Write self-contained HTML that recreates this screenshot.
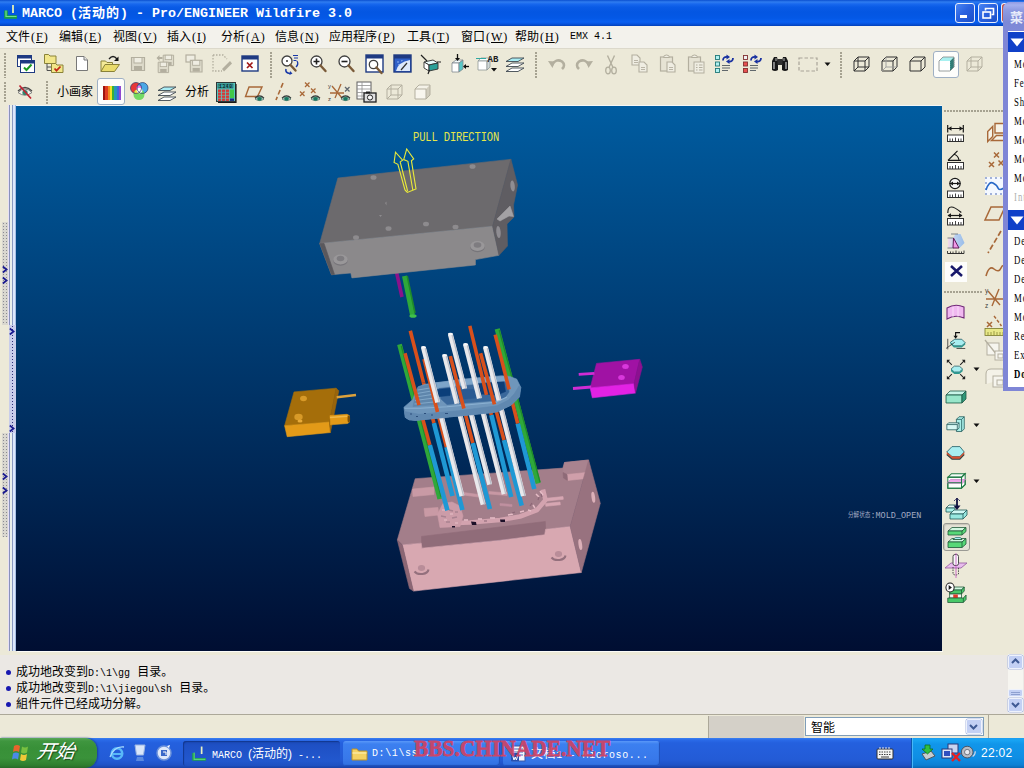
<!DOCTYPE html>
<html lang="zh-CN"><head><meta charset="utf-8"><title>MARCO - Pro/ENGINEER Wildfire 3.0</title>
<style>
*{margin:0;padding:0;box-sizing:border-box}
html,body{width:1024px;height:768px;overflow:hidden;background:#ece9d8}
body{position:relative;font-family:"Liberation Sans","Noto Sans CJK SC",sans-serif;font-size:12px;color:#000}
.a{position:absolute}
.t{position:absolute;white-space:nowrap;line-height:1}
#title{left:0;top:0;width:1024px;height:26px;background:linear-gradient(#0a4fd0 0,#2f7df0 2px,#1868ee 4px,#0a5be6 7px,#0456e2 12px,#0458e6 18px,#0a60f0 22px,#0653dd 24px,#0340b8 26px)}
#menubar{left:0;top:26px;width:1024px;height:23px;background:#f3f2ec;border-bottom:1px solid #dcd9cb}
#tb{left:0;top:49px;width:1024px;height:56px;background:#ece9d8}
.mi{position:absolute;top:30px;height:14px;white-space:nowrap;font-size:12px;line-height:14px;font-family:"Liberation Serif","Noto Sans CJK SC",serif}
.mi i{font-style:normal;letter-spacing:1px;font-size:12px;margin-left:1px}
.mi u{text-decoration:underline}
#view{left:16px;top:106px;width:926px;height:545px;background:linear-gradient(#005ca0,#000e32);box-shadow:1px 1px 0 #fbfbf8,0 -1px 0 #f4f6f6}
#msg{left:0;top:655px;width:1024px;height:59px;background:#ebe8e4}
#status{left:0;top:714px;width:1024px;height:24px;background:#ece9d8;border-top:1px solid #aca899}
#task{left:0;top:738px;width:1024px;height:30px;background:linear-gradient(#3a80f0 0,#2a6ae8 2px,#2460de 5px,#245edb 12px,#235bd6 22px,#1f52c6 27px,#1941a5 30px)}
.dotsv{position:absolute;width:2px;background:repeating-linear-gradient(#a6a291 0,#a6a291 2px,transparent 2px,transparent 3px)}
.dotsh{position:absolute;height:2px;background:repeating-linear-gradient(90deg,#a6a291 0,#a6a291 2px,transparent 2px,transparent 3px)}
.ic{position:absolute;overflow:visible}
.selbtn{position:absolute;background:#fdfdfb;border:1px solid #9fb0c4;border-radius:3px}
.msgl{position:absolute;left:16px;font-size:12px;line-height:16px;white-space:nowrap;font-family:"Liberation Mono","Noto Sans CJK SC",monospace}
.msgl b{font-weight:normal;font-size:10px;letter-spacing:0px}
.bul{position:absolute;left:6px;width:5px;height:5px;border-radius:50%;background:#1818b0}
</style></head>
<body>
<div id="title" class="a"></div>
<svg class="ic" style="left:4px;top:5px" width="14" height="14" viewBox="0 0 14 14"><path d="M2 5.500v6.500h11" fill="none" stroke="#18a048" stroke-width="3.600"/><path d="M9 0v8" stroke="#e4f0b8" stroke-width="1.800" fill="none"/><path d="M2 5.500v6h10.500" fill="none" stroke="#70e090" stroke-width="1.200"/></svg>
<div class="t" style="left:22px;top:6px;color:#fff;font-weight:bold;font-size:13.33px;font-family:'Liberation Mono','Noto Sans CJK SC',monospace;letter-spacing:0px">MARCO (<span style="font-size:13px;letter-spacing:1px;font-family:'Liberation Sans','Noto Sans CJK SC',sans-serif">活动的</span>) - Pro/ENGINEER Wildfire 3.0</div>
<div class="a" style="left:955px;top:3px;width:20px;height:20px;border:1px solid #e8eefc;border-radius:3px;background:linear-gradient(135deg,#4a86f4 0,#2a62e0 45%,#1c4fc8 100%)"></div>
<div class="a" style="left:978px;top:3px;width:20px;height:20px;border:1px solid #e8eefc;border-radius:3px;background:linear-gradient(135deg,#4a86f4 0,#2a62e0 45%,#1c4fc8 100%)"></div>
<div class="a" style="left:960px;top:15px;width:7px;height:3px;background:#fff"></div>
<svg class="ic" style="left:982px;top:7px" width="13" height="13" viewBox="0 0 13 13"><path d="M3.5 3.5v-2h8v6h-2" fill="none" stroke="#fff" stroke-width="1.6"/><rect x="1" y="5" width="7.5" height="6" fill="none" stroke="#fff" stroke-width="1.6"/></svg>
<div class="a" style="left:1001px;top:3px;width:6px;height:20px;border:1px solid #e8eefc;border-right:0;border-radius:3px 0 0 3px;background:#c8584a"></div>
<div id="menubar" class="a"></div>
<div class="mi" style="left:6px">文件<i>(<u>F</u>)</i></div>
<div class="mi" style="left:59px">编辑<i>(<u>E</u>)</i></div>
<div class="mi" style="left:113px">视图<i>(<u>V</u>)</i></div>
<div class="mi" style="left:167px">插入<i>(<u>I</u>)</i></div>
<div class="mi" style="left:221px">分析<i>(<u>A</u>)</i></div>
<div class="mi" style="left:275px">信息<i>(<u>N</u>)</i></div>
<div class="mi" style="left:329px">应用程序<i>(<u>P</u>)</i></div>
<div class="mi" style="left:407px">工具<i>(<u>T</u>)</i></div>
<div class="mi" style="left:461px">窗口<i>(<u>W</u>)</i></div>
<div class="mi" style="left:515px">帮助<i>(<u>H</u>)</i></div>
<div class="mi" style="left:570px;font-family:'Liberation Mono',monospace;font-size:10px;letter-spacing:0px">EMX 4.1</div>
<div id="tb" class="a"></div>
<div class="a" style="left:0;top:105px;width:16px;height:546px;background:#ece9d8"></div>
<div class="a" style="left:8px;top:105px;width:8px;height:220px;background:linear-gradient(90deg,#e6e0f6 0,#e6e0f6 1px,#8a92ba 1px,#8a92ba 2px,#eaf0ec 2px,#eaf0ec 4px,#8a9ac2 4px,#8a9ac2 5px,#dce8fc 5px,#dce8fc 7px,#a9c0e6 7px,#a9c0e6 8px)"></div>
<div class="a" style="left:8px;top:433px;width:8px;height:218px;background:linear-gradient(90deg,#e6e0f6 0,#e6e0f6 1px,#8a92ba 1px,#8a92ba 2px,#eaf0ec 2px,#eaf0ec 4px,#8a9ac2 4px,#8a9ac2 5px,#dce8fc 5px,#dce8fc 7px,#a9c0e6 7px,#a9c0e6 8px)"></div>
<div class="a" style="left:2px;top:222px;width:6px;height:103px;background:#d9d7cf;background-image:radial-gradient(circle,#8a8a92 0.7px,transparent 1px);background-size:3px 3px"></div>
<div class="a" style="left:2px;top:433px;width:6px;height:104px;background:#d9d7cf;background-image:radial-gradient(circle,#8a8a92 0.7px,transparent 1px);background-size:3px 3px"></div>
<div class="a" style="left:9px;top:325px;width:7px;height:108px;background:#c9cdea;background-image:radial-gradient(circle,#30307a 0.7px,transparent 1px);background-size:7px 3px"></div>
<svg class="ic" style="left:2px;top:266px" width="6" height="7" viewBox="0 0 6 7"><path d="M0.8 0.5L4.6 3.5L0.8 6.5" fill="none" stroke="#1a1a90" stroke-width="1.7"/></svg>
<svg class="ic" style="left:2px;top:277px" width="6" height="7" viewBox="0 0 6 7"><path d="M0.8 0.5L4.6 3.5L0.8 6.5" fill="none" stroke="#1a1a90" stroke-width="1.7"/></svg>
<svg class="ic" style="left:9px;top:328px" width="6" height="7" viewBox="0 0 6 7"><path d="M0.8 0.5L4.6 3.5L0.8 6.5" fill="none" stroke="#1a1a90" stroke-width="1.7"/></svg>
<svg class="ic" style="left:9px;top:425px" width="6" height="7" viewBox="0 0 6 7"><path d="M0.8 0.5L4.6 3.5L0.8 6.5" fill="none" stroke="#1a1a90" stroke-width="1.7"/></svg>
<svg class="ic" style="left:2px;top:473px" width="6" height="7" viewBox="0 0 6 7"><path d="M0.8 0.5L4.6 3.5L0.8 6.5" fill="none" stroke="#1a1a90" stroke-width="1.7"/></svg>
<svg class="ic" style="left:2px;top:487px" width="6" height="7" viewBox="0 0 6 7"><path d="M0.8 0.5L4.6 3.5L0.8 6.5" fill="none" stroke="#1a1a90" stroke-width="1.7"/></svg>
<div id="view" class="a"></div>
<div class="a" style="left:942px;top:105px;width:82px;height:546px;background:#ece9d8"></div>
<div class="dotsh" style="left:944px;top:110px;width:60px"></div>
<div class="dotsh" style="left:944px;top:291px;width:39px"></div>
<div id="msg" class="a"></div>
<div class="bul" style="top:670px"></div>
<div class="msgl" style="top:665px">成功地改变到<b>D:\1\gg</b> 目录。</div>
<div class="bul" style="top:686px"></div>
<div class="msgl" style="top:681px">成功地改变到<b>D:\1\jiegou\sh</b> 目录。</div>
<div class="bul" style="top:702px"></div>
<div class="msgl" style="top:697px">組件元件已经成功分解。</div>
<div class="a" style="left:1008px;top:654px;width:15px;height:59px;background:#f6f5f0"></div>
<div class="a" style="left:1008px;top:655px;width:15px;height:14px;border:1px solid #eef2fc;border-radius:2px;background:#c3d0f4;box-shadow:0 0 0 0.5px #a9b8e0"></div><svg class="ic" style="left:1009px;top:655px" width="13" height="13" viewBox="0 0 13 13"><path d="M3 8L6.5 4.5L10 8" fill="none" stroke="#3f5a94" stroke-width="2"/></svg>
<div class="a" style="left:1008px;top:698px;width:15px;height:14px;border:1px solid #eef2fc;border-radius:2px;background:#c3d0f4;box-shadow:0 0 0 0.5px #a9b8e0"></div><svg class="ic" style="left:1009px;top:698px" width="13" height="13" viewBox="0 0 13 13"><path d="M3 5L6.5 8.5L10 5" fill="none" stroke="#3f5a94" stroke-width="2"/></svg>
<div class="a" style="left:1008px;top:689px;width:15px;height:8px;border:1px solid #eef2fc;border-radius:2px;background:#c3d0f4"></div>
<div class="a" style="left:1011px;top:692px;width:9px;height:1px;background:#8ea0d0"></div><div class="a" style="left:1011px;top:694px;width:9px;height:1px;background:#8ea0d0"></div>
<div id="status" class="a"></div>
<div class="a" style="left:708px;top:716px;width:96px;height:22px;background:#d4d0c8;border-left:1px solid #aca899"></div>
<div class="a" style="left:805px;top:717px;width:179px;height:19px;background:#fff;border:1px solid #7f9db9"></div>
<div class="t" style="left:811px;top:722px;font-size:12px;font-family:'Liberation Sans','Noto Sans CJK SC',sans-serif">智能</div>
<div class="a" style="left:966px;top:719px;width:16px;height:15px;border:1px solid #eef2fc;border-radius:2px;background:#c3d0f4;box-shadow:0 0 0 0.5px #a9b8e0"></div><svg class="ic" style="left:967px;top:720px" width="13" height="13" viewBox="0 0 13 13"><path d="M3 5L6.5 8.5L10 5" fill="none" stroke="#3f5a94" stroke-width="2"/></svg>
<div class="a" style="left:988px;top:715px;width:1px;height:23px;background:#aca899"></div>
<svg class="ic" style="left:16px;top:106px" width="926" height="545" viewBox="16 106 926 545">
<line x1="396.5" y1="272.0" x2="402.0" y2="297.0" stroke="#8a128a" stroke-width="3.6" stroke-linecap="butt"/>
<line x1="404.5" y1="276.0" x2="412.5" y2="315.0" stroke="#2fa83a" stroke-width="5.0" stroke-linecap="butt"/>
<line x1="407.2" y1="276.0" x2="415.0" y2="313.0" stroke="#1f8a2a" stroke-width="1.6" stroke-linecap="butt"/>
<ellipse cx="413" cy="316" rx="3.6" ry="1.8" fill="#3fbf4a"/>
<polygon points="337.9,178.0 510.9,159.3 492.6,226.3 319.7,243.5" fill="#6c6a6d" stroke="#6c6a6d" stroke-width="0.6" stroke-linejoin="round" />
<polygon points="319.7,243.5 492.6,226.3 499.0,255.3 475.4,259.6 475.4,265.0 351.9,277.9 350.8,273.0 331.5,274.7" fill="#8b898b" stroke="#8b898b" stroke-width="0.6" stroke-linejoin="round" />
<polygon points="319.7,243.5 324.0,243.3 334.5,274.4 331.5,274.7" fill="#5a585c" stroke="#5a585c" stroke-width="0.6" stroke-linejoin="round" />
<polygon points="510.9,159.3 517.6,185.0 513.5,205.0 514.0,217.0 507.0,224.0 507.5,246.0 499.0,255.3 492.6,226.3" fill="#5f5d62" stroke="#5f5d62" stroke-width="0.6" stroke-linejoin="round" />
<polygon points="497.0,219.0 510.0,206.0 513.5,216.5 509.0,216.0 500.0,221.0" fill="#a3a1a4" stroke="#a3a1a4" stroke-width="0.6" stroke-linejoin="round" />
<ellipse cx="512.6" cy="186" rx="2.2" ry="5.5" fill="#8f8d92" transform="rotate(-6 512.6 186)"/>
<ellipse cx="498.500" cy="232" rx="2.2" ry="6" fill="#8f8d92" transform="rotate(-6 498.5 232)"/>
<ellipse cx="373.5" cy="177.5" rx="3" ry="2.3" fill="#8d8b8e"/>
<ellipse cx="472.5" cy="166.5" rx="3" ry="2.3" fill="#8d8b8e"/>
<ellipse cx="388.5" cy="228.5" rx="3" ry="2.3" fill="#8d8b8e"/>
<ellipse cx="426.0" cy="224.0" rx="3" ry="2.3" fill="#8d8b8e"/>
<ellipse cx="455.5" cy="227.0" rx="3" ry="2.3" fill="#8d8b8e"/>
<ellipse cx="356.0" cy="237.5" rx="3" ry="2.3" fill="#8d8b8e"/>
<path d="M385 203l1.500-1.500v4zM379 215l3 0-1.500 2z" fill="#8d8b8e"/>
<ellipse cx="340.5" cy="260.7" rx="7.2" ry="5" fill="#77757a"/>
<ellipse cx="340.5" cy="259.5" rx="7.2" ry="5" fill="#999799"/>
<ellipse cx="340.5" cy="258.5" rx="3.800" ry="2.800" fill="#7e7c80"/>
<ellipse cx="477.5" cy="247.2" rx="7.2" ry="5" fill="#77757a"/>
<ellipse cx="477.5" cy="246.0" rx="7.2" ry="5" fill="#999799"/>
<ellipse cx="477.5" cy="245.0" rx="3.800" ry="2.800" fill="#7e7c80"/>
<path d="M405 190L397.9 164.3L394.1 162.5L395.5 152.2L402.6 160.2L400.2 161.9L407.6 191M405 190L407.3 192.4L416 188.9L411.4 160.7L413.7 159L406.7 149L403.7 159.6L407.9 161.3L412.8 190" fill="none" stroke="#eaea3a" stroke-width="1.1" stroke-linejoin="miter"/>
<polygon points="415.2,478.7 562.8,468.1 564.5,462.5 588.6,460.0 570.2,526.6 545.6,529.3 544.7,534.8 421.9,548.2 421.2,543.2 402.4,544.9 397.3,540.0" fill="#a37e8a" stroke="#a37e8a" stroke-width="0.6" stroke-linejoin="round" />
<polygon points="564.5,462.5 588.6,460.0 586.0,472.5 567.0,474.5 563.0,472.5" fill="#a9838f" stroke="#a9838f" stroke-width="0.6" stroke-linejoin="round" />
<polygon points="567.0,474.5 586.0,472.5 586.0,478.5 567.5,480.5" fill="#cf9faa" stroke="#cf9faa" stroke-width="0.6" stroke-linejoin="round" />
<polygon points="563.0,472.5 567.0,474.5 567.5,480.5 563.5,478.0" fill="#8e6a77" stroke="#8e6a77" stroke-width="0.6" stroke-linejoin="round" />
<polygon points="412.5,489.0 434.0,487.0 434.0,494.5 413.0,496.5" fill="#c99aa5" stroke="#c99aa5" stroke-width="0.6" stroke-linejoin="round" />
<polygon points="424.0,508.5 438.0,507.5 438.5,515.0 425.0,516.5" fill="#c99aa5" stroke="#c99aa5" stroke-width="0.6" stroke-linejoin="round" />
<polygon points="421.5,536.4 545.3,521.5 545.6,529.3 544.7,534.8 421.9,548.2" fill="#906c79" stroke="#906c79" stroke-width="0.6" stroke-linejoin="round" />
<polygon points="402.4,544.9 421.2,543.2 421.9,548.2 500.0,540.3 544.7,534.8 545.6,529.3 570.2,526.6 581.3,572.5 413.4,591.1" fill="#d8a8b1" stroke="#d8a8b1" stroke-width="0.6" stroke-linejoin="round" />
<polygon points="397.3,540.0 402.4,544.9 413.4,591.1 409.5,588.5" fill="#8c6674" stroke="#8c6674" stroke-width="0.6" stroke-linejoin="round" />
<polygon points="588.6,460.0 600.3,503.3 581.3,572.5 570.2,526.6" fill="#98727f" stroke="#98727f" stroke-width="0.6" stroke-linejoin="round" />
<ellipse cx="593.3" cy="497.3" rx="1.8" ry="5.5" fill="#dcb0b8" transform="rotate(-8 593.3 497.3)"/>
<ellipse cx="580.3" cy="544.5" rx="1.8" ry="5.5" fill="#dcb0b8" transform="rotate(-8 580.3 544.5)"/>
<path d="M414.5 571.5a7.500 5 0 0 0 14 -2" fill="none" stroke="#94707d" stroke-width="2"/>
<ellipse cx="421.5" cy="568.0" rx="3.600" ry="3" fill="#b98d99"/>
<path d="M551.5 557.5a7.500 5 0 0 0 14 -2" fill="none" stroke="#94707d" stroke-width="2"/>
<ellipse cx="558.5" cy="554.0" rx="3.600" ry="3" fill="#b98d99"/>
<path d="M441 523.500L470 522.500L500 520L520 516.500L537 510L545.500 500L543 489.500" fill="none" stroke="#d3a3af" stroke-width="4.600" stroke-linejoin="round"/>
<polygon points="437.5,514.0 443.0,503.5 452.0,502.0 460.0,506.0 463.0,516.0 460.0,526.5 440.0,527.5" fill="#cc9ca8" stroke="#cc9ca8" stroke-width="0.6" stroke-linejoin="round" />
<path d="M444 506l3 0M449 510l4 1M441 516l5 1M452 518l5-1M446 522l4 0M455 512l3 0" stroke="#a98290" stroke-width="1.400"/>
<path d="M442 510l3 0M450 514l3 0M444 520l3 0M455 523l3 0" stroke="#e8c0c8" stroke-width="1.200"/>
<polygon points="547.0,498.2 563.0,496.6 563.3,499.3 547.3,501.0" fill="#d6a6b2" stroke="#d6a6b2" stroke-width="0.6" stroke-linejoin="round" />
<polygon points="545.5,503.5 560.0,502.0 560.3,504.8 545.8,506.3" fill="#d6a6b2" stroke="#d6a6b2" stroke-width="0.6" stroke-linejoin="round" />
<polygon points="463.5,492.5 478.5,494.5 478.5,497.0 463.5,495.0" fill="#c898a4" stroke="#c898a4" stroke-width="0.6" stroke-linejoin="round" />
<polygon points="489.0,491.5 507.0,493.0 507.0,495.5 489.0,494.0" fill="#c898a4" stroke="#c898a4" stroke-width="0.6" stroke-linejoin="round" />
<polygon points="500.0,503.5 512.0,504.5 512.0,506.5 500.0,505.5" fill="#c090a0" stroke="#c090a0" stroke-width="0.6" stroke-linejoin="round" />
<path d="M536 494l3 3M540 491l3 4M533 505l2 3M528 510l3 1M520 512l4-1M508 515l5-1M490 518l5 0M478 519l4 0M464 520l4 0" stroke="#e6bcc6" stroke-width="1.500"/>
<path d="M530 506l2-3M538 500l1-3M512 513l3-1M484 521l3 0M541 494l1 3" stroke="#8c6676" stroke-width="1.200"/>
<path d="M471 521.500l5 0.500l0.500 3l-4.500 0zM500 519.500l5 0l0 2.500l-4.500 0zM452 526h3v1.500h-3z" fill="#1c1028"/>
<line x1="399.5" y1="344.4" x2="439.8" y2="499.0" stroke="#2fa83a" stroke-width="4.8" stroke-linecap="butt"/>
<line x1="401.3" y1="346.0" x2="441.2" y2="497.0" stroke="#1f8a2a" stroke-width="1.3" stroke-linecap="butt"/>
<line x1="497.2" y1="328.8" x2="538.2" y2="483.4" stroke="#2fa83a" stroke-width="5.2" stroke-linecap="butt"/>
<line x1="499.2" y1="330.0" x2="540.0" y2="482.0" stroke="#1f8a2a" stroke-width="1.3" stroke-linecap="butt"/>
<line x1="429.8" y1="445.0" x2="447.4" y2="510.3" stroke="#1f98d4" stroke-width="4.6" stroke-linecap="butt"/>
<line x1="419.0" y1="405.1" x2="429.8" y2="445.0" stroke="#d8501c" stroke-width="3.6" stroke-linecap="butt"/>
<line x1="433.9" y1="423.0" x2="452.5" y2="496.0" stroke="#1f98d4" stroke-width="4.6" stroke-linecap="butt"/>
<line x1="423.5" y1="382.6" x2="433.9" y2="423.0" stroke="#d8501c" stroke-width="3.6" stroke-linecap="butt"/>
<line x1="446.4" y1="447.0" x2="462.4" y2="510.0" stroke="#1f98d4" stroke-width="4.6" stroke-linecap="butt"/>
<line x1="437.5" y1="412.0" x2="446.4" y2="447.0" stroke="#d8501c" stroke-width="3.6" stroke-linecap="butt"/>
<line x1="472.8" y1="443.0" x2="489.9" y2="509.0" stroke="#1f98d4" stroke-width="4.6" stroke-linecap="butt"/>
<line x1="463.9" y1="408.5" x2="472.8" y2="443.0" stroke="#d8501c" stroke-width="3.6" stroke-linecap="butt"/>
<line x1="491.4" y1="415.0" x2="511.2" y2="497.0" stroke="#1f98d4" stroke-width="4.6" stroke-linecap="butt"/>
<line x1="486.5" y1="394.9" x2="491.4" y2="415.0" stroke="#d8501c" stroke-width="3.6" stroke-linecap="butt"/>
<line x1="504.0" y1="440.0" x2="521.7" y2="505.6" stroke="#1f98d4" stroke-width="4.6" stroke-linecap="butt"/>
<line x1="494.4" y1="404.4" x2="504.0" y2="440.0" stroke="#d8501c" stroke-width="3.6" stroke-linecap="butt"/>
<line x1="517.7" y1="423.5" x2="534.3" y2="489.0" stroke="#1f98d4" stroke-width="4.6" stroke-linecap="butt"/>
<line x1="509.1" y1="389.4" x2="517.7" y2="423.5" stroke="#d8501c" stroke-width="3.6" stroke-linecap="butt"/>
<line x1="437.7" y1="402.4" x2="462.0" y2="496.0" stroke="#e9e9ec" stroke-width="5.0" stroke-linecap="butt"/>
<line x1="439.3" y1="402.4" x2="463.6" y2="496.0" stroke="#b9bcc6" stroke-width="1.3" stroke-linecap="butt"/>
<line x1="457.0" y1="403.7" x2="483.1" y2="504.5" stroke="#e9e9ec" stroke-width="5.0" stroke-linecap="butt"/>
<line x1="458.6" y1="403.7" x2="484.7" y2="504.5" stroke="#b9bcc6" stroke-width="1.3" stroke-linecap="butt"/>
<line x1="464.6" y1="388.7" x2="489.7" y2="484.5" stroke="#e9e9ec" stroke-width="5.0" stroke-linecap="butt"/>
<line x1="466.2" y1="388.7" x2="491.3" y2="484.5" stroke="#b9bcc6" stroke-width="1.3" stroke-linecap="butt"/>
<line x1="479.4" y1="398.3" x2="504.2" y2="494.0" stroke="#e9e9ec" stroke-width="5.0" stroke-linecap="butt"/>
<line x1="481.0" y1="398.3" x2="505.8" y2="494.0" stroke="#b9bcc6" stroke-width="1.3" stroke-linecap="butt"/>
<line x1="499.0" y1="400.3" x2="523.4" y2="496.0" stroke="#e9e9ec" stroke-width="5.0" stroke-linecap="butt"/>
<line x1="500.6" y1="400.3" x2="525.0" y2="496.0" stroke="#b9bcc6" stroke-width="1.3" stroke-linecap="butt"/>
<polygon points="403.9,407.2 412.8,399.6 415.5,392.0 418.2,386.7 425.0,384.3 437.4,382.6 463.4,379.1 501.6,375.7 509.8,376.4 516.7,379.1 520.8,387.3 519.4,396.9 511.2,405.1 497.2,411.8 490.7,412.8 449.7,416.9 415.5,420.4 409.0,419.8 405.3,417.4" fill="#6f96bb" stroke="#6f96bb" stroke-width="0.6" stroke-linejoin="round" />
<polygon points="439.0,388.5 505.0,381.5 508.0,385.0 509.0,392.0 505.0,397.5 496.0,400.5 447.0,404.5 441.0,399.0" fill="#3a689b" stroke="#3a689b" stroke-width="0.6" stroke-linejoin="round" />
<polygon points="437.4,389.5 450.0,388.3 450.0,395.5 437.4,396.7" fill="#0b3f7a" stroke="#0b3f7a" stroke-width="0.6" stroke-linejoin="round" />
<polygon points="477.0,382.0 503.5,379.8 505.5,391.5 497.0,395.0 481.0,394.0" fill="#0d3d76" stroke="#0d3d76" stroke-width="0.6" stroke-linejoin="round" />
<polygon points="452.0,391.0 474.0,389.0 476.0,398.0 455.0,400.0" fill="#2a5a92" stroke="#2a5a92" stroke-width="0.6" stroke-linejoin="round" />
<polygon points="434.6,382.9 482.5,377.8 504.4,376.6 505.0,381.0 483.0,382.5 435.5,387.8" fill="#7da5c9" stroke="#7da5c9" stroke-width="0.6" stroke-linejoin="round" />
<polygon points="418.5,387.0 436.0,383.3 438.5,404.5 413.0,406.5 415.5,395.0" fill="#5f86ac" stroke="#5f86ac" stroke-width="0.6" stroke-linejoin="round" />
<path d="M418 390l18-3M417 393.500l20-3.500M416 397l22-3.500M415 400.500l23-3M414.500 404l24-2.500" stroke="#86abcc" stroke-width="0.9"/>
<polygon points="404.5,411.5 419.0,414.3 458.0,410.8 497.0,405.8 508.5,400.0 514.5,393.5 519.0,386.0 520.8,387.3 519.4,396.9 511.2,405.1 497.2,411.8 490.7,412.8 449.7,416.9 415.5,420.4 409.0,419.8 405.3,417.4" fill="#6088b0" stroke="#6088b0" stroke-width="0.6" stroke-linejoin="round" />
<path d="M404.500 408.200L420 408.300L447 406.800L496 402.300L507 397" fill="none" stroke="#8bb1d2" stroke-width="1.1"/>
<path d="M410 414l2 0M416 416.500l2 0M424 413.500l2 0M431 415l2 0M445 413.500l3 0" stroke="#2c4f7c" stroke-width="1"/>
<line x1="405.0" y1="353.2" x2="419.0" y2="405.1" stroke="#d8501c" stroke-width="3.6" stroke-linecap="butt"/>
<line x1="410.3" y1="330.7" x2="423.5" y2="382.6" stroke="#d8501c" stroke-width="3.6" stroke-linecap="butt"/>
<line x1="424.0" y1="359.0" x2="437.5" y2="412.0" stroke="#d8501c" stroke-width="3.6" stroke-linecap="butt"/>
<line x1="450.3" y1="356.1" x2="463.9" y2="408.5" stroke="#d8501c" stroke-width="3.6" stroke-linecap="butt"/>
<line x1="469.8" y1="325.9" x2="486.5" y2="394.9" stroke="#d8501c" stroke-width="3.6" stroke-linecap="butt"/>
<line x1="480.6" y1="353.2" x2="494.4" y2="404.4" stroke="#d8501c" stroke-width="3.6" stroke-linecap="butt"/>
<line x1="495.2" y1="334.6" x2="509.1" y2="389.4" stroke="#d8501c" stroke-width="3.6" stroke-linecap="butt"/>
<line x1="423.4" y1="347.3" x2="437.7" y2="402.4" stroke="#e9e9ec" stroke-width="5.0" stroke-linecap="butt"/>
<line x1="425.1" y1="347.8" x2="439.3" y2="402.4" stroke="#bcbfc9" stroke-width="1.3" stroke-linecap="butt"/>
<ellipse cx="423.4" cy="347.3" rx="2.4" ry="1.3" fill="#f8f8fa"/>
<line x1="444.5" y1="355.2" x2="457.0" y2="403.7" stroke="#e9e9ec" stroke-width="5.0" stroke-linecap="butt"/>
<line x1="446.2" y1="355.7" x2="458.6" y2="403.7" stroke="#bcbfc9" stroke-width="1.3" stroke-linecap="butt"/>
<ellipse cx="444.5" cy="355.2" rx="2.4" ry="1.3" fill="#f8f8fa"/>
<line x1="450.3" y1="334.0" x2="464.6" y2="388.7" stroke="#e9e9ec" stroke-width="5.0" stroke-linecap="butt"/>
<line x1="452.0" y1="334.5" x2="466.2" y2="388.7" stroke="#bcbfc9" stroke-width="1.3" stroke-linecap="butt"/>
<ellipse cx="450.3" cy="334.0" rx="2.4" ry="1.3" fill="#f8f8fa"/>
<line x1="465.5" y1="344.4" x2="479.4" y2="398.3" stroke="#e9e9ec" stroke-width="5.0" stroke-linecap="butt"/>
<line x1="467.2" y1="344.9" x2="481.0" y2="398.3" stroke="#bcbfc9" stroke-width="1.3" stroke-linecap="butt"/>
<ellipse cx="465.5" cy="344.4" rx="2.4" ry="1.3" fill="#f8f8fa"/>
<line x1="485.5" y1="347.3" x2="499.0" y2="400.3" stroke="#e9e9ec" stroke-width="5.0" stroke-linecap="butt"/>
<line x1="487.2" y1="347.8" x2="500.6" y2="400.3" stroke="#bcbfc9" stroke-width="1.3" stroke-linecap="butt"/>
<ellipse cx="485.5" cy="347.3" rx="2.4" ry="1.3" fill="#f8f8fa"/>
<polygon points="294.0,391.9 336.1,388.2 329.4,422.1 284.6,425.7" fill="#a56e0a" stroke="#a56e0a" stroke-width="0.6" stroke-linejoin="round" />
<polygon points="284.6,425.7 329.4,422.1 330.4,432.5 287.2,436.7" fill="#e39a18" stroke="#e39a18" stroke-width="0.6" stroke-linejoin="round" />
<polygon points="336.1,388.2 338.8,390.8 330.4,432.5 329.4,422.1" fill="#99640a" stroke="#99640a" stroke-width="0.6" stroke-linejoin="round" />
<ellipse cx="303.500" cy="398.500" rx="3.400" ry="2.700" fill="#d89a28"/>
<ellipse cx="298.500" cy="417" rx="4.200" ry="3.300" fill="#d89a28"/><ellipse cx="300" cy="421" rx="2.500" ry="1.600" fill="#e8aa38"/>
<line x1="336.7" y1="397.2" x2="356.0" y2="395.0" stroke="#dca23c" stroke-width="2.6" stroke-linecap="butt"/>
<polygon points="330.0,415.5 347.0,414.3 349.3,415.5 349.5,422.0 347.5,423.5 330.5,424.8" fill="#e39a18" stroke="#e39a18" stroke-width="0.6" stroke-linejoin="round" />
<line x1="330.0" y1="417.5" x2="347.0" y2="416.3" stroke="#f0b848" stroke-width="1.4" stroke-linecap="butt"/>
<ellipse cx="348.800" cy="419" rx="1.300" ry="3.500" fill="#7a5008"/>
<polygon points="596.5,363.4 639.7,359.3 634.0,383.8 590.2,387.9" fill="#a012a4" stroke="#a012a4" stroke-width="0.6" stroke-linejoin="round" />
<polygon points="590.2,387.9 634.0,383.8 635.5,393.1 592.3,397.8" fill="#e222e4" stroke="#e222e4" stroke-width="0.6" stroke-linejoin="round" />
<polygon points="639.7,359.3 642.3,367.0 635.5,393.1 634.0,383.8" fill="#8c1090" stroke="#8c1090" stroke-width="0.6" stroke-linejoin="round" />
<ellipse cx="625.500" cy="366.500" rx="3.300" ry="2.500" fill="#d838dc"/><ellipse cx="621.500" cy="377.500" rx="3.300" ry="2.500" fill="#d838dc"/>
<line x1="578.7" y1="374.4" x2="594.4" y2="373.3" stroke="#d02cd4" stroke-width="2.8" stroke-linecap="butt"/>
<line x1="573.0" y1="388.4" x2="591.2" y2="386.9" stroke="#d02cd4" stroke-width="3.0" stroke-linecap="butt"/>
</svg>
<div class="t" style="left:413px;top:131px;color:#e6e64a;font-size:10.5px;font-family:'Liberation Mono',monospace;letter-spacing:-0.15px;transform-origin:0 0;transform:scaleY(1.2)">PULL DIRECTION</div>
<div class="t" style="left:848px;top:511px;color:#a2aac2;font-size:8.500px;font-family:'Liberation Mono','Noto Sans CJK SC',monospace;transform-origin:0 0;transform:scaleY(1.15)"><span style="font-size:5.600px;font-family:'Liberation Sans','Noto Sans CJK SC',sans-serif;vertical-align:1px">分解状态</span>:MOLD_OPEN</div>
<div class="dotsv" style="left:4px;top:53px;height:25px"></div>
<div class="dotsv" style="left:4px;top:82px;height:21px"></div>
<div class="dotsv" style="left:46px;top:81px;height:23px"></div>
<div class="dotsv" style="left:270px;top:52px;height:27px"></div>
<div class="dotsv" style="left:535px;top:52px;height:27px"></div>
<div class="dotsv" style="left:840px;top:52px;height:27px"></div>
<svg class="ic" style="left:16px;top:54px" width="20" height="20" viewBox="0 0 20 20" preserveAspectRatio="none"><rect x="1.5" y="1.5" width="14" height="11" fill="#fff" stroke="#1f3a82"/><rect x="1" y="1" width="15" height="3.500" fill="#1f3a82"/><rect x="4.500" y="6.500" width="14" height="12" fill="#fff" stroke="#1f3a82"/><rect x="4" y="6" width="15" height="3.500" fill="#1f3a82"/><path d="M8 13.500l2.500 2.500l5-5.500" fill="none" stroke="#1a9a20" stroke-width="2"/></svg>
<svg class="ic" style="left:43px;top:53px" width="22" height="22" viewBox="0 0 22 22" preserveAspectRatio="none"><path d="M1.5 1.5h4l1.500 1.500h6v7.500h-11.500z" fill="#f2e68a" stroke="#8a8238" stroke-width="1"/><path d="M4 10.500v7h4" fill="none" stroke="#505050" stroke-width="1"/><path d="M4 14h4" stroke="#505050"/><path d="M8.5 10.5h4l1.500 1.500h6v7.500h-11.500z" fill="#f2e68a" stroke="#8a8238" stroke-width="1"/><path d="M11.500 15.500l2 2.200l4-4.200" fill="none" stroke="#c02818" stroke-width="1.800"/></svg>
<svg class="ic" style="left:75px;top:55px" width="14" height="17" viewBox="0 0 14 17" preserveAspectRatio="none"><path d="M1.500 1.500h7.500l3.500 3.500v10.500h-11z" fill="#fff" stroke="#787878"/><path d="M9 1.500v3.500h3.500" fill="#e8e8e8" stroke="#787878"/></svg>
<svg class="ic" style="left:99px;top:54px" width="22" height="19" viewBox="0 0 22 19" preserveAspectRatio="none"><path d="M2 17.500v-10.500h4.500l1.500 1.500h5.500v2" fill="#f4ea98" stroke="#8a8238"/><path d="M2 17.500l4-7h14.500l-5 7z" fill="#eadc6c" stroke="#8a8238"/><path d="M10 5q4-5 8 0" fill="none" stroke="#202020" stroke-width="1.300"/><path d="M19.500 2.500v4.500h-4.500z" fill="#101010"/></svg>
<svg class="ic" style="left:130px;top:56px" width="16" height="16" viewBox="0 0 16 16" preserveAspectRatio="none"><path d="M1.500 1.500h13v13h-13z" fill="#dedbcb" stroke="#b3af9f" stroke-width="1.200"/><rect x="4" y="1.500" width="8" height="5.500" fill="#efede2" stroke="#b3af9f"/><rect x="4" y="10" width="8" height="4" fill="#b3af9f"/></svg>
<svg class="ic" style="left:156px;top:53px" width="20" height="21" viewBox="0 0 20 21" preserveAspectRatio="none"><g transform="translate(6,1) scale(0.8)"><path d="M1.500 1.500h13v13h-13z" fill="#dedbcb" stroke="#b3af9f" stroke-width="1.200"/><rect x="4" y="1.500" width="8" height="5.500" fill="#efede2" stroke="#b3af9f"/><rect x="4" y="10" width="8" height="4" fill="#b3af9f"/></g><g transform="translate(1,8) scale(0.8)"><path d="M1.500 1.500h13v13h-13z" fill="#dedbcb" stroke="#b3af9f" stroke-width="1.200"/><rect x="4" y="1.500" width="8" height="5.500" fill="#efede2" stroke="#b3af9f"/><rect x="4" y="10" width="8" height="4" fill="#b3af9f"/></g><path d="M0.500 5l3-3v2h3v2h-3v2z" fill="#b3af9f"/></svg>
<svg class="ic" style="left:185px;top:54px" width="19" height="20" viewBox="0 0 19 20" preserveAspectRatio="none"><rect x="1" y="1" width="9" height="7" fill="#efede2" stroke="#b3af9f" stroke-width="1.200"/><g transform="translate(4,5) scale(0.9)"><path d="M1.500 1.500h13v13h-13z" fill="#dedbcb" stroke="#b3af9f" stroke-width="1.200"/><rect x="4" y="1.500" width="8" height="5.500" fill="#efede2" stroke="#b3af9f"/><rect x="4" y="10" width="8" height="4" fill="#b3af9f"/></g></svg>
<svg class="ic" style="left:211px;top:53px" width="22" height="22" viewBox="0 0 22 22" preserveAspectRatio="none"><path d="M2 2h10l4 4M2 2v16h9" fill="none" stroke="#b3af9f" stroke-width="1.300" stroke-dasharray="1.500 1.500"/><path d="M11 16l8-8 2 2.500-8 8z" fill="#b3af9f"/></svg>
<svg class="ic" style="left:241px;top:55px" width="18" height="17" viewBox="0 0 18 17" preserveAspectRatio="none"><rect x="1" y="1" width="16" height="15" fill="#fff" stroke="#1f3a82" stroke-width="1.400"/><rect x="1" y="1" width="16" height="3.500" fill="#1f3a82"/><path d="M6 7.500l5.500 5.500M11.500 7.500l-5.500 5.500" stroke="#a01818" stroke-width="1.700"/></svg>
<svg class="ic" style="left:280px;top:53px" width="22" height="23" viewBox="0 0 22 23" preserveAspectRatio="none"><circle cx="7" cy="8" r="5" fill="#fff" stroke="#404040" stroke-width="1.300"/><path d="M10.5 12l5 5.500" stroke="#7a5a38" stroke-width="2.400" stroke-linecap="round"/><circle cx="7" cy="8" r="1" fill="#303030"/><path d="M13 2.500h5M14 5h4M13.500 7.500h3" stroke="#1838a8" stroke-width="1.100"/><path d="M17 8q2 3-1 6" fill="none" stroke="#1838a8" stroke-width="1.300"/><path d="M6 16q-1 4 4 4.500" fill="none" stroke="#1838a8" stroke-width="1.600"/><path d="M10 18l2.500 2.500-3 1.500z" fill="#1838a8"/></svg>
<svg class="ic" style="left:309px;top:54px" width="20" height="21" viewBox="0 0 20 21" preserveAspectRatio="none"><circle cx="7.5" cy="7.5" r="5.5" fill="#fff" stroke="#404040" stroke-width="1.300"/><path d="M11.5 11.5l5 5.500" stroke="#7a5a38" stroke-width="2.400" stroke-linecap="round"/><path d="M4.500 7.500h6M7.500 4.500v6" stroke="#202020" stroke-width="1.600"/></svg>
<svg class="ic" style="left:337px;top:54px" width="20" height="21" viewBox="0 0 20 21" preserveAspectRatio="none"><circle cx="7.5" cy="7.5" r="5.5" fill="#fff" stroke="#404040" stroke-width="1.300"/><path d="M11.5 11.5l5 5.500" stroke="#7a5a38" stroke-width="2.400" stroke-linecap="round"/><path d="M4.500 7.500h6" stroke="#202020" stroke-width="1.600"/></svg>
<svg class="ic" style="left:365px;top:54px" width="19" height="19" viewBox="0 0 19 19" preserveAspectRatio="none"><rect x="1" y="1" width="17" height="17" fill="#fff" stroke="#1f3a82" stroke-width="1.400"/><rect x="1" y="1" width="17" height="3.500" fill="#1f3a82"/><circle cx="8.5" cy="10.5" r="4.2" fill="#fff" stroke="#404040" stroke-width="1.300"/><path d="M11.5 13.5l5 5.500" stroke="#7a5a38" stroke-width="2.400" stroke-linecap="round"/></svg>
<svg class="ic" style="left:393px;top:54px" width="19" height="19" viewBox="0 0 19 19" preserveAspectRatio="none"><rect x="1" y="1" width="17" height="17" fill="#3060c8" stroke="#1f3a82" stroke-width="1.400"/><rect x="1" y="1" width="17" height="3.500" fill="#1f3a82"/><path d="M3 17Q5 8 17 6v11z" fill="#dce8fa"/><path d="M8 16l6-7" stroke="#303030" stroke-width="1.200"/><path d="M4 8l2 0M5 11l2-0.500M8 7l1.500-0.500" stroke="#a8c8f8" stroke-width="0.800"/></svg>
<svg class="ic" style="left:419px;top:52px" width="23" height="24" viewBox="0 0 23 24" preserveAspectRatio="none"><path d="M5 10l9-2 5 3-9 2z" fill="#e8fafa" stroke="#303030" stroke-width="0.900"/><path d="M5 10v6l5 3v-6z" fill="#fff" stroke="#303030" stroke-width="0.900"/><path d="M10 13l9-2v6l-9 2z" fill="#2aa098" stroke="#303030" stroke-width="0.900"/><path d="M2 3l6 6M22 10h-4M9 22l1.500-4" stroke="#202020" stroke-width="1.200"/></svg>
<svg class="ic" style="left:448px;top:53px" width="22" height="22" viewBox="0 0 22 22" preserveAspectRatio="none"><path d="M4 10l4-3h7l-4 3z" fill="#f4fcfc" stroke="#808890" stroke-width="0.800"/><path d="M4 10h7v9h-7z" fill="#fff" stroke="#808890" stroke-width="0.800"/><path d="M11 10l4-3v9l-4 3z" fill="#58c8c8" stroke="#808890" stroke-width="0.800"/><path d="M9.500 1v6" stroke="#101010" stroke-width="1.300"/><path d="M7 5l2.500 3 2.500-3z" fill="#101010"/><path d="M21 13.500h-5" stroke="#101010" stroke-width="1.300"/><path d="M18 11l-3 2.500 3 2.500z" fill="#101010"/></svg>
<svg class="ic" style="left:476px;top:52px" width="24" height="24" viewBox="0 0 24 24" preserveAspectRatio="none"><path d="M2 9l3-3h9l-3 3z" fill="#f4fcfc" stroke="#909898" stroke-width="0.800"/><path d="M2 9h9v9h-9z" fill="#fff" stroke="#909898" stroke-width="0.800"/><path d="M11 9l3-3v9l-3 3z" fill="#d0d8d8" stroke="#909898" stroke-width="0.800"/><path d="M0 6.500h10" stroke="#30a8a0" stroke-width="1"/><text x="11.500" y="9.500" font-family="Liberation Mono,monospace" font-size="9" font-weight="bold" fill="#202020" textLength="11">AB</text><path d="M15 16h6l-3 3.500z" fill="#101010"/></svg>
<svg class="ic" style="left:505px;top:54px" width="21" height="20" viewBox="0 0 21 20" preserveAspectRatio="none"><path d="M1 17.5l6-3.500h12l-6 3.500z" fill="#fff" stroke="#404850" stroke-width="0.900"/><path d="M1 12.5l6-3.500h12l-6 3.500z" fill="#fff" stroke="#404850" stroke-width="0.900"/><path d="M1 7.5l6-3.500h12l-6 3.500z" fill="#a8ecf4" stroke="#404850" stroke-width="0.900"/></svg>
<svg class="ic" style="left:547px;top:56px" width="20" height="16" viewBox="0 0 20 16" preserveAspectRatio="none"><path d="M5 9Q9 2 15 5.500Q19 9 15 13" fill="none" stroke="#b3af9f" stroke-width="2.600"/><path d="M1 5l7 0.500-2.500 6.500z" fill="#b3af9f"/></svg>
<svg class="ic" style="left:574px;top:56px" width="20" height="16" viewBox="0 0 20 16" preserveAspectRatio="none"><path d="M15 9Q11 2 5 5.500Q1 9 5 13" fill="none" stroke="#b3af9f" stroke-width="2.600"/><path d="M19 5l-7 0.500 2.500 6.500z" fill="#b3af9f"/></svg>
<svg class="ic" style="left:604px;top:54px" width="14" height="21" viewBox="0 0 14 21" preserveAspectRatio="none"><path d="M3.500 1.500l5.500 12M10.500 1.500l-5.500 12" stroke="#b3af9f" stroke-width="1.400" fill="none"/><ellipse cx="4" cy="16.500" rx="2.300" ry="3.300" fill="none" stroke="#b3af9f" stroke-width="1.300"/><ellipse cx="10" cy="16.500" rx="2.300" ry="3.300" fill="none" stroke="#b3af9f" stroke-width="1.300"/></svg>
<svg class="ic" style="left:631px;top:54px" width="18" height="20" viewBox="0 0 18 20" preserveAspectRatio="none"><path d="M1 1h5l3 3v7h-8z" fill="#efede2" stroke="#b3af9f" stroke-width="1.100"/><path d="M3 6.5h4M3 8.5h4" stroke="#b3af9f" stroke-width="0.900"/><path d="M8 8h5l3 3v7h-8z" fill="#efede2" stroke="#b3af9f" stroke-width="1.100"/><path d="M10 13.5h4M10 15.5h4" stroke="#b3af9f" stroke-width="0.900"/></svg>
<svg class="ic" style="left:659px;top:54px" width="19" height="21" viewBox="0 0 19 21" preserveAspectRatio="none"><rect x="1.500" y="3" width="12" height="14" fill="#e6e3d4" stroke="#b3af9f" stroke-width="1.200"/><path d="M4.500 3.500q0-2.500 3-2.500t3 2.500z" fill="#efede2" stroke="#b3af9f"/><path d="M8 8h5l3 3v7h-8z" fill="#efede2" stroke="#b3af9f" stroke-width="1.100"/><path d="M10 13.5h4M10 15.5h4" stroke="#b3af9f" stroke-width="0.900"/></svg>
<svg class="ic" style="left:687px;top:54px" width="19" height="21" viewBox="0 0 19 21" preserveAspectRatio="none"><rect x="1.500" y="3" width="12" height="14" fill="#e6e3d4" stroke="#b3af9f" stroke-width="1.200"/><path d="M4.500 3.500q0-2.500 3-2.500t3 2.500z" fill="#efede2" stroke="#b3af9f"/><rect x="7" y="8" width="10" height="11" fill="#efede2" stroke="#b3af9f"/><path d="M9 11h1.500M12 11h3.500M9 13.500h1.500M12 13.500h3.500M9 16h1.500M12 16h3.500" stroke="#b3af9f" stroke-width="1"/></svg>
<svg class="ic" style="left:714px;top:54px" width="21" height="20" viewBox="0 0 21 20" preserveAspectRatio="none"><rect x="1.500" y="1.5" width="4" height="4" fill="#b0f0f0" stroke="#207878" stroke-width="0.900"/><rect x="1.500" y="8" width="4" height="4" fill="#b0f0f0" stroke="#207878" stroke-width="0.900"/><rect x="1.500" y="14.5" width="4" height="4" fill="#b0f0f0" stroke="#207878" stroke-width="0.900"/><path d="M8 11.500h8M8 14h8M8 16.500h6" stroke="#505860" stroke-width="0.900"/><path d="M9 6.500q0-4 4.500-3.500" fill="none" stroke="#1830a0" stroke-width="1.800"/><path d="M12.500 0.500l3.500 2.500-3.500 2.500z" fill="#1830a0"/><path d="M19 4q0 4-4.500 3.500" fill="none" stroke="#1830a0" stroke-width="1.800"/><path d="M15.500 10l-3.500-2.500 3.500-2.500z" fill="#1830a0"/></svg>
<svg class="ic" style="left:742px;top:54px" width="21" height="20" viewBox="0 0 21 20" preserveAspectRatio="none"><rect x="1.500" y="1.5" width="4" height="4" fill="#f0f0f0" stroke="#803030" stroke-width="0.900"/><rect x="1.500" y="8" width="4" height="4" fill="#e85050" stroke="#803030" stroke-width="0.900"/><rect x="1.500" y="14.5" width="4" height="4" fill="#e85050" stroke="#803030" stroke-width="0.900"/><path d="M8 11.500h8M8 14h8M8 16.500h6" stroke="#505860" stroke-width="0.900"/><path d="M9 6.500q0-4 4.500-3.500" fill="none" stroke="#1830a0" stroke-width="1.800"/><path d="M12.500 0.500l3.500 2.500-3.500 2.500z" fill="#1830a0"/><path d="M19 4q0 4-4.500 3.500" fill="none" stroke="#1830a0" stroke-width="1.800"/><path d="M15.500 10l-3.500-2.500 3.500-2.500z" fill="#1830a0"/></svg>
<svg class="ic" style="left:770px;top:55px" width="20" height="18" viewBox="0 0 20 18" preserveAspectRatio="none"><path d="M2 6l2-4h3l1 4v9q-3 2-6 0z" fill="#181818"/><path d="M18 6l-2-4h-3l-1 4v9q3 2 6 0z" fill="#181818"/><rect x="7.500" y="4" width="5" height="6" fill="#303030"/><path d="M4 7v7M16 7v7" stroke="#c8c8c8" stroke-width="1.200"/><path d="M6 3v3M14 3v3" stroke="#e0e0e0" stroke-width="0.800"/></svg>
<svg class="ic" style="left:798px;top:57px" width="20" height="15" viewBox="0 0 20 15" preserveAspectRatio="none"><rect x="1" y="1" width="18" height="13" fill="none" stroke="#a8a498" stroke-width="1.200" stroke-dasharray="3.500 2"/></svg>
<svg class="ic" style="left:824px;top:62px" width="7" height="5" viewBox="0 0 7 5" preserveAspectRatio="none"><path d="M0.500 0.500h6l-3 3.500z" fill="#101010"/></svg>
<svg class="ic" style="left:852px;top:54px" width="19" height="20" viewBox="0 0 19 20" preserveAspectRatio="none"><path d="M2 7h11v10h-11zM2 7l4-4h11l-4 4M17 3v10l-4 4" fill="none" stroke="#303030" stroke-width="1"/><path d="M6 3v10h11M6 13l-4 4" fill="none" stroke="#303030" stroke-width="1"/></svg>
<svg class="ic" style="left:880px;top:54px" width="19" height="20" viewBox="0 0 19 20" preserveAspectRatio="none"><path d="M2 7h11v10h-11zM2 7l4-4h11l-4 4M17 3v10l-4 4" fill="none" stroke="#303030" stroke-width="1"/><path d="M6 3v10h11M6 13l-4 4" fill="none" stroke="#9a9a9a" stroke-width="0.900"/></svg>
<svg class="ic" style="left:908px;top:54px" width="19" height="20" viewBox="0 0 19 20" preserveAspectRatio="none"><path d="M2 7h11v10h-11zM2 7l4-4h11l-4 4M17 3v10l-4 4" fill="none" stroke="#303030" stroke-width="1"/></svg>
<div class="selbtn" style="left:933px;top:51px;width:26px;height:27px"></div>
<svg class="ic" style="left:937px;top:54px" width="19" height="20" viewBox="0 0 19 20" preserveAspectRatio="none"><path d="M2 7l4-4h11l-4 4z" fill="#a8f0f0"/><path d="M2 7h11v10h-11z" fill="#fff"/><path d="M13 7l4-4v10l-4 4z" fill="#409890"/><path d="M13.500 8l3.500-3.500M13.500 10l3.500-3.500M13.500 12l3.500-3.500M13.500 14l3.500-3.500M13.500 16l3.500-3.500" stroke="#184840" stroke-width="0.700"/><path d="M2 7l4-4h11v10l-4 4h-11z" fill="none" stroke="#808888" stroke-width="0.800"/></svg>
<svg class="ic" style="left:965px;top:54px" width="19" height="20" viewBox="0 0 19 20" preserveAspectRatio="none"><path d="M2 7h11v10h-11zM2 7l4-4h11l-4 4M17 3v10l-4 4" fill="none" stroke="#b3af9f" stroke-width="1"/><path d="M6 3v10h11M6 13l-4 4" fill="none" stroke="#b3af9f" stroke-width="1"/></svg>
<svg class="ic" style="left:16px;top:84px" width="18" height="16" viewBox="0 0 18 16" preserveAspectRatio="none"><path d="M2 8.500q7-7 14 0q-7 5.500-14 0z" fill="#f4f4f0" stroke="#707070" stroke-width="0.900"/><circle cx="9" cy="8.500" r="2.600" fill="#308870"/><path d="M2 7q7-7 14 0" fill="none" stroke="#484848" stroke-width="1.300"/><path d="M3.500 1.500l11.500 13" stroke="#c02030" stroke-width="1.700"/></svg>
<div class="t" style="left:57px;top:86px;font-size:12px;font-family:'Liberation Sans','Noto Sans CJK SC',sans-serif">小画家</div>
<div class="selbtn" style="left:97px;top:78px;width:28px;height:27px"></div>
<div class="a" style="left:103px;top:86px;width:18px;height:14px;background:linear-gradient(90deg,#9c1410 0,#9c1410 12%,#e03a20 12%,#e03a20 25%,#f08c20 25%,#f08c20 37%,#f0e428 37%,#f0e428 50%,#38b038 50%,#38b038 63%,#2498b8 63%,#2498b8 75%,#3c68e0 75%,#3c68e0 88%,#9048d0 88%,#9048d0 100%)"></div>
<svg class="ic" style="left:129px;top:81px" width="21" height="21" viewBox="0 0 21 21" preserveAspectRatio="none"><circle cx="7" cy="7" r="5.500" fill="#e83838"/><circle cx="13.500" cy="7" r="5.500" fill="#38a0e8" fill-opacity="0.900"/><circle cx="10" cy="13.500" r="5.500" fill="#68d858" fill-opacity="0.900"/><circle cx="10" cy="7" r="2.600" fill="#f078e8"/><circle cx="7.500" cy="11" r="2" fill="#f0e040"/><circle cx="10.500" cy="9.500" r="2.800" fill="#fff"/><circle cx="7" cy="7" r="5.500" fill="none" stroke="#283868" stroke-width="0.700"/><circle cx="13.500" cy="7" r="5.500" fill="none" stroke="#283868" stroke-width="0.700"/></svg>
<svg class="ic" style="left:157px;top:83px" width="21" height="19" viewBox="0 0 21 19" preserveAspectRatio="none"><path d="M1 17.5l6-3.500h12l-6 3.500z" fill="#fff" stroke="#404850" stroke-width="0.900"/><path d="M1 12.5l6-3.500h12l-6 3.500z" fill="#fff" stroke="#404850" stroke-width="0.900"/><path d="M1 7.5l6-3.500h12l-6 3.500z" fill="#a8ecf4" stroke="#404850" stroke-width="0.900"/></svg>
<div class="t" style="left:185px;top:86px;font-size:12px;font-family:'Liberation Sans','Noto Sans CJK SC',sans-serif">分析</div>
<svg class="ic" style="left:216px;top:82px" width="21" height="21" viewBox="0 0 21 21" preserveAspectRatio="none"><rect x="0.500" y="0.500" width="19" height="19" fill="#58c8c0" stroke="#303838"/><rect x="2" y="2" width="15" height="4" fill="#38a8a8" stroke="#204848" stroke-width="0.600"/><text x="3" y="5.600" font-family="Liberation Mono,monospace" font-size="4.500" font-weight="bold" fill="#102020" textLength="13">1340</text><rect x="2" y="7.5" width="3.200" height="2.400" fill="#d83838"/><rect x="6" y="7.5" width="3.200" height="2.400" fill="#d83838"/><rect x="10" y="7.5" width="3.200" height="2.400" fill="#d83838"/><rect x="2" y="10.5" width="3.200" height="2.400" fill="#d83838"/><rect x="6" y="10.5" width="3.200" height="2.400" fill="#d83838"/><rect x="10" y="10.5" width="3.200" height="2.400" fill="#d83838"/><rect x="2" y="13.5" width="3.200" height="2.400" fill="#d83838"/><rect x="6" y="13.5" width="3.200" height="2.400" fill="#d83838"/><rect x="10" y="13.5" width="3.200" height="2.400" fill="#d83838"/><rect x="2" y="16.5" width="3.200" height="2.400" fill="#d83838"/><rect x="6" y="16.5" width="3.200" height="2.400" fill="#d83838"/><rect x="10" y="16.5" width="3.200" height="2.400" fill="#d83838"/><rect x="14" y="7.500" width="4" height="8.500" fill="#40c848"/><rect x="14" y="16.500" width="4" height="2.400" fill="#182880"/><path d="M20 2v18.500h-18" fill="none" stroke="#181818" stroke-width="1.200"/></svg>
<svg class="ic" style="left:244px;top:84px" width="23" height="19" viewBox="0 0 23 19" preserveAspectRatio="none"><path d="M5 3h13l-4.500 9.500h-12z" fill="none" stroke="#a86838" stroke-width="1.400"/><path d="M11 15q4.500-4 9 0q-4.500 3.200-9 0z" fill="#dcece8" stroke="#386058" stroke-width="0.700"/><ellipse cx="15.5" cy="14.8" rx="2.400" ry="1.900" fill="#187860"/><path d="M11 14.2q4.500-4.500 9 0" fill="none" stroke="#303838" stroke-width="1.200"/></svg>
<svg class="ic" style="left:272px;top:82px" width="23" height="21" viewBox="0 0 23 21" preserveAspectRatio="none"><path d="M11 1l-7 17" stroke="#a86838" stroke-width="1.600" stroke-dasharray="5 2.500"/><path d="M10 17q4.500-4 9 0q-4.500 3.200-9 0z" fill="#dcece8" stroke="#386058" stroke-width="0.700"/><ellipse cx="14.5" cy="16.8" rx="2.400" ry="1.900" fill="#187860"/><path d="M10 16.2q4.500-4.500 9 0" fill="none" stroke="#303838" stroke-width="1.200"/></svg>
<svg class="ic" style="left:299px;top:82px" width="24" height="21" viewBox="0 0 24 21" preserveAspectRatio="none"><path d="M6 0.5l4.500 4.500M10.5 0.5l-4.500 4.500" stroke="#a86838" stroke-width="1.300"/><path d="M1 9.5l4.500 4.500M5.5 9.5l-4.500 4.500" stroke="#a86838" stroke-width="1.300"/><path d="M12 6.5l4.500 4.500M16.5 6.5l-4.500 4.500" stroke="#a86838" stroke-width="1.300"/><path d="M12 17q4.500-4 9 0q-4.500 3.200-9 0z" fill="#dcece8" stroke="#386058" stroke-width="0.700"/><ellipse cx="16.5" cy="16.8" rx="2.400" ry="1.900" fill="#187860"/><path d="M12 16.2q4.500-4.500 9 0" fill="none" stroke="#303838" stroke-width="1.200"/></svg>
<svg class="ic" style="left:327px;top:81px" width="25" height="22" viewBox="0 0 25 22" preserveAspectRatio="none"><path d="M5 5l10 12M14 3l-6 14M3 12h14" stroke="#a86838" stroke-width="1.300"/><text x="1" y="7" font-size="6" font-family="Liberation Sans,sans-serif" fill="#404040">y</text><text x="1" y="20" font-size="6" font-family="Liberation Sans,sans-serif" fill="#404040">z</text><path d="M18 6l4.500 4.500M22.5 6l-4.500 4.500" stroke="#606870" stroke-width="1.300"/><path d="M14 18q4.500-4 9 0q-4.500 3.200-9 0z" fill="#dcece8" stroke="#386058" stroke-width="0.700"/><ellipse cx="18.5" cy="17.8" rx="2.400" ry="1.900" fill="#187860"/><path d="M14 17.2q4.500-4.500 9 0" fill="none" stroke="#303838" stroke-width="1.200"/></svg>
<svg class="ic" style="left:356px;top:81px" width="22" height="23" viewBox="0 0 22 23" preserveAspectRatio="none"><rect x="1" y="1" width="14" height="17" fill="#fff" stroke="#606060"/><path d="M1 4.500h14M1 8h14M1 11.500h14M1 15h14M6 1v17" stroke="#909090" stroke-width="0.800"/><rect x="8" y="12" width="12" height="9" fill="#e0e0e0" stroke="#202020" stroke-width="1.300"/><circle cx="14" cy="16.500" r="2.600" fill="#f8f8f8" stroke="#202020"/><rect x="10" y="10.500" width="4" height="2" fill="#202020"/></svg>
<svg class="ic" style="left:385px;top:82px" width="20" height="20" viewBox="0 0 20 20" preserveAspectRatio="none"><path d="M2 7h11v10h-11zM2 7l4-4h11l-4 4M17 3v10l-4 4" fill="none" stroke="#b3af9f" stroke-width="1"/><path d="M6 3v10h11M6 13l-4 4" fill="none" stroke="#b3af9f" stroke-width="1"/></svg>
<svg class="ic" style="left:413px;top:82px" width="20" height="20" viewBox="0 0 20 20" preserveAspectRatio="none"><path d="M2 7l4-4h11l-4 4z" fill="#f4f2e8"/><path d="M2 7h11v10h-11z" fill="#f8f6ee"/><path d="M13 7l4-4v10l-4 4z" fill="#d0ccbc"/><path d="M2 7h11v10h-11zM2 7l4-4h11v10l-4 4" fill="none" stroke="#b3af9f" stroke-width="1"/></svg>
<svg class="ic" style="left:947px;top:124px" width="17" height="19" viewBox="0 0 17 19" preserveAspectRatio="none"><path d="M0.700 1v7.500M16.300 1v7.500M1 4.500h15" stroke="#181818" stroke-width="1.200" fill="none"/><path d="M1 4.500l3.500-2.300v4.600zM16 4.500l-3.500-2.300v4.600z" fill="#181818"/><rect x="0.500" y="11" width="16" height="6.500" fill="#fff" stroke="#303030" stroke-width="1"/><path d="M3 14.5v3M5.500 14.5v3M8.500 13.5v4M11.500 14.5v3M14 14.5v3" stroke="#303030" stroke-width="0.900"/></svg>
<svg class="ic" style="left:947px;top:150px" width="17" height="21" viewBox="0 0 17 21" preserveAspectRatio="none"><path d="M1 10.300l9.500-9.500M1 10.300h13" fill="none" stroke="#181818" stroke-width="1.200"/><path d="M7 4.300q4.500 1.500 5 6" fill="none" stroke="#181818" stroke-width="1.100"/><rect x="0.500" y="12.5" width="16" height="6.500" fill="#fff" stroke="#303030" stroke-width="1"/><path d="M3 16v3M5.500 16v3M8.500 15v4M11.500 16v3M14 16v3" stroke="#303030" stroke-width="0.900"/></svg>
<svg class="ic" style="left:947px;top:177px" width="17" height="22" viewBox="0 0 17 22" preserveAspectRatio="none"><circle cx="8" cy="6.500" r="5.200" fill="#f8f8f8" stroke="#181818" stroke-width="1.200"/><path d="M2.500 6.500h11" stroke="#181818" stroke-width="1.200"/><path d="M3 6.500l3-2v4zM13 6.500l-3-2v4z" fill="#181818"/><rect x="0.500" y="14" width="16" height="6.500" fill="#fff" stroke="#303030" stroke-width="1"/><path d="M3 17.5v3M5.500 17.5v3M8.500 16.5v4M11.500 17.5v3M14 17.5v3" stroke="#303030" stroke-width="0.900"/></svg>
<svg class="ic" style="left:947px;top:205px" width="17" height="22" viewBox="0 0 17 22" preserveAspectRatio="none"><path d="M0.800 8q0-6 3.500-6t10 5.500" fill="none" stroke="#181818" stroke-width="1.200"/><path d="M1 10.500h14" stroke="#181818" stroke-width="1.200"/><path d="M0.500 10.500l3.500-2.300v4.600zM15.500 10.500l-3.500-2.300v4.600z" fill="#181818"/><rect x="0.500" y="13.5" width="16" height="6.500" fill="#fff" stroke="#303030" stroke-width="1"/><path d="M3 17v3M5.500 17v3M8.500 16v4M11.500 17v3M14 17v3" stroke="#303030" stroke-width="0.900"/></svg>
<svg class="ic" style="left:947px;top:232px" width="18" height="23" viewBox="0 0 18 23" preserveAspectRatio="none"><defs><linearGradient id="ga" x1="0" x2="1"><stop offset="0" stop-color="#f4d8e8"/><stop offset="0.450" stop-color="#b8d0f0"/><stop offset="1" stop-color="#98bce8"/></linearGradient></defs><path d="M1 6h5l2.500-4h5l4 9-5 5h-11.500z" fill="url(#ga)"/><path d="M4 2h7M0.500 6h6M0.500 16h6" stroke="#707880" stroke-width="0.900" fill="none"/><path d="M6.500 6l5.500 10h-6z" fill="#f098e8" stroke="#601858" stroke-width="1"/><path d="M0.500 21.500h16.500" stroke="#303030" stroke-width="1"/><path d="M0.500 19v2.500M3.500 19.500v2M6 19.500v2M9 18.500v3M12 19.500v2M14.500 19.500v2M17 18.500v3" stroke="#303030" stroke-width="0.900"/></svg>
<div class="a" style="left:945px;top:262px;width:22px;height:20px;background:#fdfdfb"></div>
<svg class="ic" style="left:950px;top:265px" width="13" height="12" viewBox="0 0 13 12" preserveAspectRatio="none"><path d="M1 1l11 10M12 1l-11 10" stroke="#18186a" stroke-width="2.600"/></svg>
<svg class="ic" style="left:945px;top:303px" width="21" height="20" viewBox="0 0 21 20" preserveAspectRatio="none"><path d="M2 5q8-5 17-1v11q-9-4-17 1z" fill="#f0b8f0" stroke="#702878" stroke-width="1.100"/><path d="M8 3.500v11M13 3v11" stroke="#fff" stroke-width="0.800" opacity="0.700"/></svg>
<svg class="ic" style="left:945.5px;top:330px" width="21" height="22" viewBox="0 0 24 25" preserveAspectRatio="none"><path d="M5 14l5-3.500h8l4 4-4 3.500h-9z" fill="#a8eef0" stroke="#205860" stroke-width="0.900"/><path d="M5 14l4 4h9l4-3.500v2l-4 3.500h-9l-4-4z" fill="#309890"/><path d="M2 10v12M0 21l10-7M12 21h10" stroke="#303030" stroke-width="0.900"/><path d="M16 3h-5v5" fill="none" stroke="#101010" stroke-width="1.300"/><path d="M8.500 6.500l2.500 3.500 2.500-3.500z" fill="#101010"/></svg>
<svg class="ic" style="left:946px;top:358.5px" width="20" height="21" viewBox="0 0 24 25" preserveAspectRatio="none"><path d="M6 12l4-3.500h6l4 3.500-4 3.500h-6z" fill="#a8eef0" stroke="#205860" stroke-width="0.900"/><path d="M6 12l4 3.500h6l4-3.500v2.500l-4 3.500h-6l-4-3.500z" fill="#309890"/><path d="M2 2l5 5M22 2l-5 5M2 23l5-5M22 23l-5-5" stroke="#202020" stroke-width="1.200"/><path d="M1 1h4l-4 4zM23 1h-4l4 4zM1 24h4l-4-4zM23 24h-4l4-4z" fill="#202020"/></svg>
<svg class="ic" style="left:973px;top:367px" width="6" height="4" viewBox="0 0 6 4" preserveAspectRatio="none"><path d="M0.500 0.500h6l-3 3.500z" fill="#101010"/></svg>
<svg class="ic" style="left:945px;top:386.5px" width="22" height="20" viewBox="0 0 22 20" preserveAspectRatio="none"><path d="M1 8l4-4h16l-4 4z" fill="#c8f4e8" stroke="#205848" stroke-width="0.800"/><path d="M1 8h16v8h-16z" fill="#88e0c0" stroke="#205848" stroke-width="0.800"/><path d="M17 8l4-4v8l-4 4z" fill="#309878" stroke="#205848" stroke-width="0.800"/><path d="M2 10h14M2 12h14M2 14h14" stroke="#b8f0dc" stroke-width="0.700"/></svg>
<svg class="ic" style="left:946px;top:415px" width="20" height="20" viewBox="0 0 23 23" preserveAspectRatio="none"><path d="M12 5l3-3h6v14l-3 3h-6z" fill="#a8eee8" stroke="#205858" stroke-width="0.900"/><path d="M18 5v14M12 5h6l3-3" fill="none" stroke="#205858" stroke-width="0.900"/><path d="M1 11l2-2h12v6l-2 2h-12z" fill="#d8f8f4" stroke="#205858" stroke-width="0.900"/><path d="M1 11h12v6M13 11l2-2" fill="none" stroke="#205858" stroke-width="0.900"/></svg>
<svg class="ic" style="left:973px;top:423px" width="6" height="4" viewBox="0 0 6 4" preserveAspectRatio="none"><path d="M0.500 0.500h6l-3 3.500z" fill="#101010"/></svg>
<svg class="ic" style="left:945px;top:442.5px" width="21" height="18" viewBox="0 0 24 20" preserveAspectRatio="none"><path d="M2 10l6-6h9l5 6-5 5h-9z" fill="#a8eef0" stroke="#205860" stroke-width="0.900"/><path d="M2 10l6 5h9l5-5v3l-5 5h-9l-6-5z" fill="#d85030"/><path d="M2 13l6 5h9l5-5" fill="none" stroke="#304848" stroke-width="1.200"/></svg>
<svg class="ic" style="left:945.5px;top:470.5px" width="21" height="19" viewBox="0 0 23 21" preserveAspectRatio="none"><path d="M2 7l4-4h15l-4 4z" fill="#f4fcf8" stroke="#1f7a44" stroke-width="1.100"/><path d="M2 7h15v12h-15zM17 7l4-4v12l-4 4" fill="#fbfdfb" stroke="#1f7a44" stroke-width="1.100"/><path d="M1 13.500l4-4h17l-4 4z" fill="#f0a8ec" stroke="#b060b0" stroke-width="0.600"/><path d="M2 7h15v6h-15M17 7l4-4" fill="none" stroke="#1f7a44" stroke-width="1.100"/><path d="M2 13.500v5.500h15v-5.500M17 19l4-4v-5" fill="none" stroke="#1f7a44" stroke-width="1.100"/></svg>
<svg class="ic" style="left:973px;top:479px" width="6" height="4" viewBox="0 0 6 4" preserveAspectRatio="none"><path d="M0.500 0.500h6l-3 3.500z" fill="#101010"/></svg>
<svg class="ic" style="left:945px;top:497px" width="24" height="23" viewBox="0 0 24 23" preserveAspectRatio="none"><path d="M1 11l3-3h9l-3 3z" fill="#e8fcf8" stroke="#205858" stroke-width="0.800"/><path d="M1 11h9v4h-9z" fill="#a8eee8" stroke="#205858" stroke-width="0.800"/><path d="M5 17l4-4h13l-4 4z" fill="#d0f8f4" stroke="#205858" stroke-width="0.800"/><path d="M5 17h13v5h-13zM18 17l4-4v5l-4 4" fill="#98e8e0" stroke="#205858" stroke-width="0.800"/><path d="M12 1v10" stroke="#101040" stroke-width="1.800"/><path d="M8.500 8.500l3.500 4.500 3.500-4.500z" fill="#101040"/><path d="M9 4q3-4 6 0" fill="none" stroke="#303060" stroke-width="0.900"/></svg>
<div class="a" style="left:943px;top:523px;width:27px;height:28px;background:#e4e2d6;border:1px solid #9a9a94;border-radius:3px;box-shadow:inset 1px 1px 1px #c8c6ba"></div>
<svg class="ic" style="left:946px;top:526px" width="22" height="23" viewBox="0 0 22 23" preserveAspectRatio="none"><path d="M2 5l4-3.500h14l-4 3.500z" fill="#d0f8e0" stroke="#205838" stroke-width="0.800"/><path d="M2 5h14v4h-14zM16 5l4-3.500v4l-4 3.500" fill="#58d878" stroke="#205838" stroke-width="0.800"/><path d="M7 13.500l2.500-2h5l2 2z" fill="#a8f0f0" stroke="#206868" stroke-width="0.700"/><path d="M2 16l4-3.500h2l-1 1h9l-1-1h5l-4 3.500z" fill="#d0f8e0" stroke="#205838" stroke-width="0.800"/><path d="M2 16h14v5.500h-14zM16 16l4-3.500v5.500l-4 3.500" fill="#58d878" stroke="#205838" stroke-width="0.800"/></svg>
<svg class="ic" style="left:944px;top:553px" width="24" height="25" viewBox="0 0 24 25" preserveAspectRatio="none"><path d="M1 15l6-5h16l-6 5z" fill="#e8b8f0" stroke="#884898" stroke-width="0.800" opacity="0.900"/><rect x="9" y="1.500" width="5.500" height="11" rx="2" fill="#f8f8f8" stroke="#404040" stroke-width="0.900"/><path d="M9 14v7q2.700 2 5.500 0v-7" fill="none" stroke="#404040" stroke-width="0.900" stroke-dasharray="1.500 1"/><path d="M12 0v25" stroke="#c040c0" stroke-width="0.700"/></svg>
<svg class="ic" style="left:945px;top:582px" width="22" height="23" viewBox="0 0 24 23" preserveAspectRatio="none"><path d="M5 8l3-3h13l-3 3z" fill="#d0f8e0" stroke="#205838" stroke-width="0.800"/><path d="M5 8h13v4h-13zM18 8l3-3v4l-3 3" fill="#48c868" stroke="#205838" stroke-width="0.800"/><path d="M5 12h13v4h-13z" fill="#f0f8f0" stroke="#205838" stroke-width="0.800"/><rect x="9" y="12.500" width="5" height="3.500" fill="#e03828"/><path d="M3 16h17v4.500h-17zM20 16l3-3v4.500l-3 3" fill="#48c868" stroke="#205838" stroke-width="0.800"/><circle cx="5.500" cy="5.500" r="4.500" fill="#fff" stroke="#181818" stroke-width="1.100"/><path d="M4 3l3.500 2.500-3.500 2.500z" fill="#181818"/></svg>
<svg class="ic" style="left:987px;top:122px" width="22" height="20" viewBox="0 0 22 20" preserveAspectRatio="none"><path d="M8 1.500h12v9.500h-12z" fill="#f6f2e6" stroke="#a86838" stroke-width="1.400"/><path d="M0.700 9.500l5-5v10l-5 5z" fill="#f6f2e6" stroke="#a86838" stroke-width="1.400"/><path d="M4.500 18.500l5-5h12l-5 5z" fill="#f6f2e6" stroke="#a86838" stroke-width="1.400"/></svg>
<svg class="ic" style="left:987px;top:150px" width="22" height="20" viewBox="0 0 22 20" preserveAspectRatio="none"><path d="M7 2.5l5 5M12 2.5l-5 5" stroke="#a86838" stroke-width="1.500"/><path d="M2 12l5 5M7 12l-5 5" stroke="#a86838" stroke-width="1.500"/><path d="M11.5 10.5l5 5M16.5 10.5l-5 5" stroke="#a86838" stroke-width="1.500"/></svg>
<svg class="ic" style="left:984px;top:176px" width="22" height="20" viewBox="0 0 22 20" preserveAspectRatio="none"><rect x="1" y="1" width="19" height="18" fill="#f4f8ff"/><g fill="#3858a8"><circle cx="2" cy="2" r="0.800"/><circle cx="7" cy="2" r="0.800"/><circle cx="12" cy="2" r="0.800"/><circle cx="17" cy="2" r="0.800"/><circle cx="2" cy="18" r="0.800"/><circle cx="7" cy="18" r="0.800"/><circle cx="12" cy="18" r="0.800"/><circle cx="17" cy="18" r="0.800"/><circle cx="2" cy="7" r="0.800"/><circle cx="2" cy="13" r="0.800"/></g><path d="M2 14q3-9 7-7t5 5 6 0" fill="none" stroke="#2868c8" stroke-width="1.700"/></svg>
<svg class="ic" style="left:984px;top:205px" width="22" height="18" viewBox="0 0 22 18" preserveAspectRatio="none"><path d="M7 2h14l-6 13h-14z" fill="none" stroke="#a86838" stroke-width="1.500"/></svg>
<svg class="ic" style="left:984px;top:230px" width="22" height="24" viewBox="0 0 22 24" preserveAspectRatio="none"><path d="M17 1l-13 22" stroke="#a86838" stroke-width="1.700" stroke-dasharray="5.500 2.500"/></svg>
<svg class="ic" style="left:984px;top:259px" width="22" height="22" viewBox="0 0 22 22" preserveAspectRatio="none"><path d="M2 17q3-11 8-7t7-1 5 0" fill="none" stroke="#a86838" stroke-width="1.600"/></svg>
<svg class="ic" style="left:984px;top:286px" width="22" height="24" viewBox="0 0 22 24" preserveAspectRatio="none"><path d="M4 5l12 14M15 3l-7 17M2 13h18" stroke="#a86838" stroke-width="1.400"/><text x="1" y="7" font-size="6.500" font-family="Liberation Sans,sans-serif" fill="#404040">y</text><text x="1" y="22" font-size="6.500" font-family="Liberation Sans,sans-serif" fill="#404040">z</text></svg>
<svg class="ic" style="left:984px;top:314px" width="22" height="24" viewBox="0 0 22 24" preserveAspectRatio="none"><path d="M3 8l5 5M8 8l-5 5" stroke="#a86838" stroke-width="1.500"/><path d="M10 2l2 2.500M13 6l2 2.500M16 10l1.500 2" stroke="#a86838" stroke-width="1.400"/><rect x="1" y="14.500" width="20" height="7" fill="#e8e888" stroke="#787828" stroke-width="0.800"/><path d="M4 18v3M7 18v3M10 17v4M13 18v3M16 18v3M19 18v3" stroke="#787828" stroke-width="0.700"/></svg>
<svg class="ic" style="left:984px;top:339px" width="22" height="24" viewBox="0 0 22 24" preserveAspectRatio="none"><rect x="3" y="4" width="12" height="12" fill="#f6f5ee" stroke="#b3af9f"/><path d="M1 1l16 20" stroke="#b3af9f" stroke-width="1.300"/><rect x="11" y="12" width="10" height="9" fill="#f6f5ee" stroke="#b3af9f"/><rect x="14" y="15" width="5" height="4" fill="none" stroke="#b3af9f"/></svg>
<svg class="ic" style="left:984px;top:366px" width="22" height="24" viewBox="0 0 22 24" preserveAspectRatio="none"><path d="M2 18v-10q0-5 5-5h12v10" fill="#f4f2e8" stroke="#b3af9f"/><rect x="9" y="10" width="12" height="11" fill="#f6f5ee" stroke="#b3af9f"/><rect x="13" y="14" width="6" height="5" fill="none" stroke="#b3af9f"/></svg>
<div class="a" style="left:1003px;top:2px;width:30px;height:389px;background:#7f86d6;border-radius:7px 0 0 0"></div>
<div class="a" style="left:1003px;top:2px;width:30px;height:28px;border-radius:7px 0 0 0;background:linear-gradient(#8f9ae4 0,#a4b0ee 3px,#8e9be2 8px,#7d88d6 20px,#7f8ad8 28px)"></div>
<div class="t" style="left:1010px;top:11px;color:#e8ecfa;font-size:13px;font-weight:bold;font-family:'Liberation Sans','Noto Sans CJK SC',sans-serif">菜单管理器</div>
<div class="a" style="left:1008px;top:31px;width:20px;height:356px;background:#fff"></div>
<div class="a" style="left:1008px;top:32px;width:20px;height:20px;background:#1040c8"></div>
<svg class="ic" style="left:1010px;top:38px" width="14" height="9" viewBox="0 0 14 9"><path d="M0.500 0.500h13l-6.500 8z" fill="#fff"/></svg>
<div class="a" style="left:1008px;top:210px;width:20px;height:20px;background:#1040c8"></div>
<svg class="ic" style="left:1010px;top:216px" width="14" height="9" viewBox="0 0 14 9"><path d="M0.500 0.500h13l-6.500 8z" fill="#fff"/></svg>
<div class="t" style="left:1014px;top:58px;color:#000;font-size:12.5px;font-family:'Liberation Serif',serif;letter-spacing:1.4px;transform-origin:0 0;transform:scaleX(0.7)">Mold</div>
<div class="t" style="left:1014px;top:77px;color:#000;font-size:12.5px;font-family:'Liberation Serif',serif;letter-spacing:1.4px;transform-origin:0 0;transform:scaleX(0.7)">Feature</div>
<div class="t" style="left:1014px;top:96px;color:#000;font-size:12.5px;font-family:'Liberation Serif',serif;letter-spacing:1.4px;transform-origin:0 0;transform:scaleX(0.7)">Shrinkage</div>
<div class="t" style="left:1014px;top:115px;color:#000;font-size:12.5px;font-family:'Liberation Serif',serif;letter-spacing:1.4px;transform-origin:0 0;transform:scaleX(0.7)">Mold Comp</div>
<div class="t" style="left:1014px;top:134px;color:#000;font-size:12.5px;font-family:'Liberation Serif',serif;letter-spacing:1.4px;transform-origin:0 0;transform:scaleX(0.7)">Mold Opening</div>
<div class="t" style="left:1014px;top:153px;color:#000;font-size:12.5px;font-family:'Liberation Serif',serif;letter-spacing:1.4px;transform-origin:0 0;transform:scaleX(0.7)">Mold Check</div>
<div class="t" style="left:1014px;top:172px;color:#000;font-size:12.5px;font-family:'Liberation Serif',serif;letter-spacing:1.4px;transform-origin:0 0;transform:scaleX(0.7)">Modify</div>
<div class="t" style="left:1014px;top:191px;color:#b0b0b0;font-size:12.5px;font-family:'Liberation Serif',serif;letter-spacing:1.4px;transform-origin:0 0;transform:scaleX(0.7)">Integrate</div>
<div class="t" style="left:1014px;top:235px;color:#000;font-size:12.5px;font-family:'Liberation Serif',serif;letter-spacing:1.4px;transform-origin:0 0;transform:scaleX(0.7)">Define Step</div>
<div class="t" style="left:1014px;top:254px;color:#000;font-size:12.5px;font-family:'Liberation Serif',serif;letter-spacing:1.4px;transform-origin:0 0;transform:scaleX(0.7)">Delete</div>
<div class="t" style="left:1014px;top:273px;color:#000;font-size:12.5px;font-family:'Liberation Serif',serif;letter-spacing:1.4px;transform-origin:0 0;transform:scaleX(0.7)">Delete All</div>
<div class="t" style="left:1014px;top:292px;color:#000;font-size:12.5px;font-family:'Liberation Serif',serif;letter-spacing:1.4px;transform-origin:0 0;transform:scaleX(0.7)">Modify</div>
<div class="t" style="left:1014px;top:311px;color:#000;font-size:12.5px;font-family:'Liberation Serif',serif;letter-spacing:1.4px;transform-origin:0 0;transform:scaleX(0.7)">Modify Dim</div>
<div class="t" style="left:1014px;top:330px;color:#000;font-size:12.5px;font-family:'Liberation Serif',serif;letter-spacing:1.4px;transform-origin:0 0;transform:scaleX(0.7)">Reorder</div>
<div class="t" style="left:1014px;top:349px;color:#000;font-size:12.5px;font-family:'Liberation Serif',serif;letter-spacing:1.4px;transform-origin:0 0;transform:scaleX(0.7)">Explode</div>
<div class="t" style="left:1014px;top:368px;color:#000;font-weight:bold;font-size:12.5px;font-family:'Liberation Serif',serif;letter-spacing:1.4px;transform-origin:0 0;transform:scaleX(0.7)">Done/Return</div>
<div id="task" class="a"></div>
<div class="a" style="left:0;top:738px;width:97px;height:30px;border-radius:0 12px 12px 0;background:linear-gradient(#5aa85a 0,#3f963f 3px,#389038 10px,#3a923a 20px,#2f7f2f 27px,#286a28 30px);box-shadow:1px 0 2px #1a3f9a"></div>
<svg class="ic" style="left:12px;top:743px" width="20" height="20" viewBox="0 0 20 20"><path d="M2 3q3-2 6 0l-1 6q-3-2-6 0z" fill="#e8642c"/><path d="M10 3.5q3 2 6 0l-1 6q-3 2-6 0z" fill="#78c040"/><path d="M1 10.5q3-2 6 0l-1 6q-3-2-6 0z" fill="#4a8ae8"/><path d="M9 11q3 2 6 0l-1 6q-3 2-6 0z" fill="#f0c838"/></svg>
<div class="t" style="left:37px;top:742px;font-size:19px;font-style:italic;color:#fff;font-family:'Liberation Sans','Noto Sans CJK SC',sans-serif;text-shadow:1px 1px 1px #1c4a1c;transform:skewX(-8deg)">开始</div>
<svg class="ic" style="left:108px;top:744px" width="18" height="18" viewBox="0 0 18 18"><circle cx="9" cy="9.5" r="5.2" fill="none" stroke="#58b8f8" stroke-width="2.6"/><path d="M4 10h10" stroke="#58b8f8" stroke-width="2"/><path d="M2 13Q6 2 16 3" fill="none" stroke="#a8dcff" stroke-width="1.3"/></svg>
<svg class="ic" style="left:132px;top:743px" width="16" height="20" viewBox="0 0 16 20"><path d="M3 2h10l-1.5 10h-7z" fill="#d8e6fa" stroke="#9ab4e0" stroke-width="1"/><path d="M5 14h6l1 4h-8z" fill="#5a8ae0"/></svg>
<svg class="ic" style="left:154px;top:743px" width="20" height="20" viewBox="0 0 20 20"><circle cx="10" cy="10" r="7" fill="#dfe9fb" stroke="#6f94dc" stroke-width="1.5"/><path d="M7 7h6v6h-6z" fill="#3a68c8"/><path d="M9 9h3v3" stroke="#fff" fill="none"/><path d="M13 3l3-1-1 3" fill="#fff"/></svg>
<div class="a" style="left:183px;top:741px;width:157px;height:25px;border-radius:3px;background:linear-gradient(#1a48b4 0,#1e50c4 4px,#2258ce 20px,#1e50c0 25px);box-shadow:inset 1px 1px 1px #123890"></div>
<svg class="ic" style="left:192px;top:746px" width="15" height="15" viewBox="0 0 14 14"><path d="M1.5 6.5v6h11.5" fill="none" stroke="#1fa050" stroke-width="2.6"/><path d="M9 0.5v7" stroke="#e8f0c0" stroke-width="1.6" fill="none"/><path d="M2 6v6.5h10.5" fill="none" stroke="#58d080" stroke-width="1"/></svg>
<div class="t" style="left:212px;top:748px;color:#fff;font-size:10px;font-family:'Liberation Mono','Noto Sans CJK SC',monospace">MARCO <span style="font-size:12px;font-family:'Liberation Sans','Noto Sans CJK SC',sans-serif;letter-spacing:0">(活动的)</span> -...</div>
<div class="a" style="left:343px;top:741px;width:157px;height:25px;border-radius:3px;background:linear-gradient(#5a98f8 0,#3c80f0 3px,#3878ea 18px,#3070e0 25px);box-shadow:inset -1px -1px 1px #2050b8"></div>
<div class="a" style="left:503px;top:741px;width:157px;height:25px;border-radius:3px;background:linear-gradient(#5a98f8 0,#3c80f0 3px,#3878ea 18px,#3070e0 25px);box-shadow:inset -1px -1px 1px #2050b8"></div>
<svg class="ic" style="left:351px;top:746px" width="17" height="15" viewBox="0 0 17 15"><path d="M1 3h5l1.5 2h8.5v9h-15z" fill="#f4d264" stroke="#b8902c" stroke-width="1"/><path d="M1.5 7h14" stroke="#fbe9a0" stroke-width="1.5"/></svg>
<div class="t" style="left:372px;top:749px;color:#fff;font-size:10px;letter-spacing:0.6px;font-family:'Liberation Mono',monospace">D:\1\ss...</div>
<svg class="ic" style="left:511px;top:745px" width="16" height="17" viewBox="0 0 16 17"><rect x="1" y="1" width="13" height="15" fill="#f4f6fc" stroke="#3858a8"/><path d="M3 4h9M3 7h9M3 10h9" stroke="#4a6ab8" stroke-width="1.2"/><rect x="0" y="8" width="8" height="8" fill="#2850b0"/><path d="M1.5 10l1.5 5l1.2-3l1.2 3l1.5-5" stroke="#fff" fill="none"/></svg>
<div class="t" style="left:531px;top:748px;color:#fff;font-size:10px;letter-spacing:0.6px;font-family:'Liberation Mono','Noto Sans CJK SC',monospace"><span style="font-size:12px;font-family:'Liberation Sans','Noto Sans CJK SC',sans-serif">文档</span>1 - Microso...</div>
<div class="t" style="left:414px;top:736px;font-family:'Liberation Serif',serif;font-weight:bold;font-size:24px;color:rgba(204,66,100,0.92);-webkit-text-stroke:0.9px rgba(206,70,104,0.9);transform-origin:0 0;transform:scaleX(0.892)">BBS.CHINADE.NET</div>
<svg class="ic" style="left:876px;top:746px" width="18" height="14" viewBox="0 0 18 14"><rect x="1" y="3" width="16" height="10" rx="1" fill="#f4f4f4" stroke="#303030"/><path d="M3 6h12M3 8.5h12" stroke="#404040" stroke-dasharray="1.5 1"/><path d="M5 11h8" stroke="#404040"/><path d="M4 3v-2M7 3v-2M10 3v-2M13 3v-2" stroke="#e8e8e8"/></svg>
<div class="a" style="left:911px;top:738px;width:113px;height:30px;background:linear-gradient(#1c9cf0 0,#18a4f4 2px,#1196ea 6px,#0f8ee4 20px,#0c80d4 27px,#0a68b4 30px);border-left:1px solid #0c58b0;box-shadow:inset 1px 0 0 #48b8f8"></div>
<svg class="ic" style="left:919px;top:744px" width="18" height="18" viewBox="0 0 18 18"><path d="M3 10l9-3 4 5-9 4z" fill="#c8ccd0" stroke="#505860"/><path d="M6 1h5v4h3l-5.5 5-5.500-5h3z" fill="#30c040" stroke="#107020" stroke-width=".8"/></svg>
<svg class="ic" style="left:941px;top:742px" width="22" height="22" viewBox="0 0 22 22"><rect x="7" y="2" width="10" height="9" fill="#c8d4f0" stroke="#283878"/><rect x="1" y="7" width="10" height="9" fill="#dfe6f8" stroke="#283878"/><rect x="3" y="9" width="6" height="5" fill="#3050c0"/><path d="M11 11l8 8M19 11l-8 8" stroke="#e82020" stroke-width="2.4"/></svg>
<svg class="ic" style="left:960px;top:744px" width="18" height="18" viewBox="0 0 20 20"><circle cx="8" cy="9" r="6.500" fill="#b8bcc4" stroke="#484c58"/><circle cx="8" cy="9" r="3" fill="#e8eaf0" stroke="#686c78"/><path d="M14 14q3-2 3-6" stroke="#d0d8e8" fill="none" stroke-width="1.3"/></svg>
<div class="t" style="left:981px;top:747px;color:#fff;font-size:12px;font-family:'Liberation Sans',sans-serif;letter-spacing:0.3px">22:02</div>
</body></html>
